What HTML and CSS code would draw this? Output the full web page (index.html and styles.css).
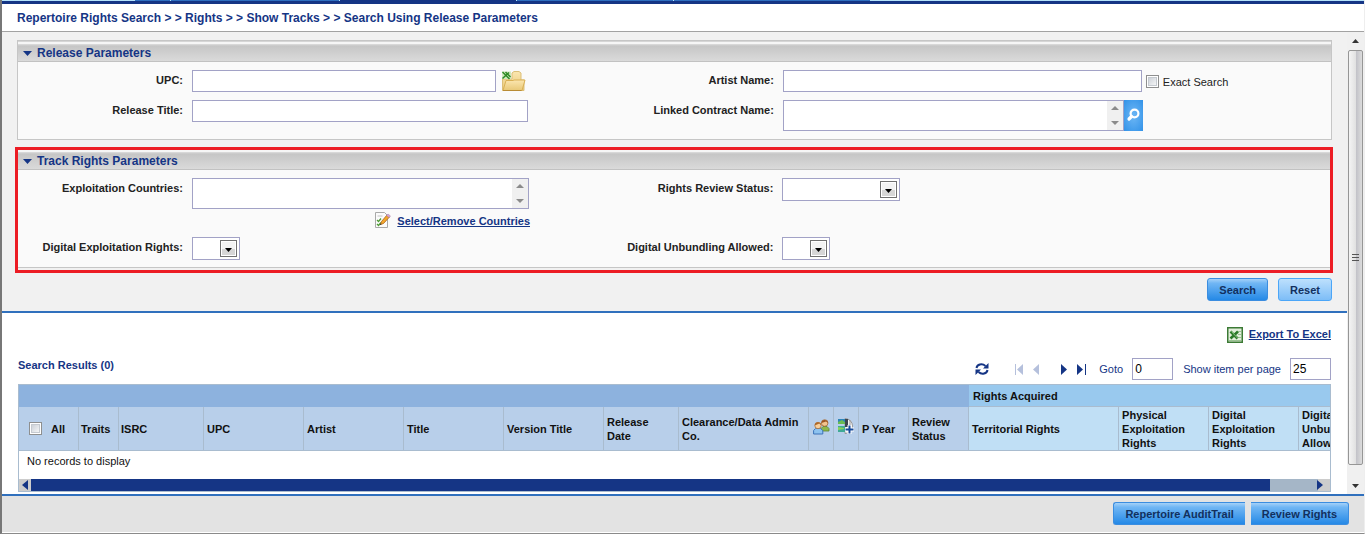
FILE: index.html
```html
<!DOCTYPE html>
<html lang="en">
<head>
<meta charset="utf-8">
<title>Repertoire Rights Search</title>
<link rel="stylesheet" href="styles.css">
</head>
<body>
<div class="app">
  <div class="tabs"><i class="tab first"></i><i class="tab second"></i><i class="tab third"></i><i class="tab current"></i><i class="tab fifth"></i><i class="tab sixth"></i><i class="tab seventh"></i></div>
  <h1 class="breadcrumb">Repertoire Rights Search &gt; &gt; Rights &gt; &gt; Show Tracks &gt; &gt; Search Using Release Parameters</h1>
  <div class="viewport">
    <main class="content">
      <form class="search">
        <section class="panel">
          <h2 class="panel-title"><svg width="9" height="5" viewBox="0 0 9 5"><path d="M0 0h9L4.500 5z" fill="#153585"/></svg>Release Parameters</h2>
          <div class="fields">
            <div class="field">
              <label for="upc">UPC:</label>
              <div class="control folder-gap"><input class="box upc" id="upc" type="text">
                <svg width="24" height="22" viewBox="0 0 24 22"><defs><linearGradient id="fold" x1="0" y1="0" x2="0" y2="1"><stop offset="0" stop-color="#fbe6b0"/><stop offset="1" stop-color="#e8c877"/></linearGradient></defs><path d="M.5 20.500V9h9.500V3l2-1.500h5L19 3v7h3v10.500z" fill="url(#fold)" stroke="#dcbf78"/><path d="M1 20.500L4 10.500h7l1-.5h11L20 20.500z" fill="url(#fold)" stroke="#d9b055"/><path d="M1 20.500h18.500" stroke="#b98c35"/><path d="M0 1.500h9V9H0z" fill="#d0e8bd"/><path d="M.5 2l7 7M7 2.500L.5 8.500M3.500 2l5 5" stroke="#2d8a24" stroke-width="1.500"/></svg></div>
            </div>
            <div class="field">
              <label for="artist">Artist Name:</label>
              <div class="control"><input class="box artist" id="artist" type="text"><input class="tick" id="exact" type="checkbox"><label class="plain" for="exact">Exact Search</label></div>
            </div>
            <div class="field">
              <label for="release">Release Title:</label>
              <div class="control"><input class="box release" id="release" type="text"></div>
            </div>
            <div class="field">
              <label for="contract">Linked Contract Name:</label>
              <div class="control flush">
                <div class="box area contract"><textarea id="contract" rows="1"></textarea><span class="spin"><svg width="8" height="20" viewBox="0 0 8 20"><path d="M0 4l4-4 4 4zM0 15h8l-4 4z" fill="#8b8b8b"/></svg></span></div>
                <button class="lookup" type="button" aria-label="Find contract"><svg width="15" height="15" viewBox="0 0 15 15"><circle cx="8.500" cy="5.500" r="3.900" fill="none" stroke="#fff" stroke-width="2.200"/><path d="M5.500 8.500L3 11" stroke="#fff" stroke-width="3.200" stroke-linecap="round"/></svg></button>
              </div>
            </div>
          </div>
        </section>
        <div class="highlight">
          <section class="panel inner">
            <h2 class="panel-title"><svg width="9" height="5" viewBox="0 0 9 5"><path d="M0 0h9L4.500 5z" fill="#153585"/></svg>Track Rights Parameters</h2>
            <div class="fields snug">
              <div class="field">
                <label for="countries">Exploitation Countries:</label>
                <div class="stack">
                  <div class="box area"><textarea id="countries" rows="1"></textarea><span class="spin"><svg width="8" height="20" viewBox="0 0 8 20"><path d="M0 4l4-4 4 4zM0 15h8l-4 4z" fill="#8b8b8b"/></svg></span></div>
                  <a class="link pick" href="#"><svg width="16" height="16" viewBox="0 0 16 16"><path d="M.5.500h9l3 3v12H.5z" fill="#fbfbfb" stroke="#a9a9a9"/><path d="M2.500 4h5" stroke="#c4c4c4"/><path d="M2 8l1.500 1.500L6 6.500M2 12l1.500 1.500L6 10.500" fill="none" stroke="#4f9a35" stroke-width="1.300"/><path d="M5.500 12.500l1-3L12 3l2.500 2L8.500 11.500z" fill="#f4a62a" stroke="#a8641a" stroke-width=".8"/><path d="M11.500 3.500L13 2l2.500 2L14 5.500z" fill="#d9a3d3" stroke="#9d7a9d" stroke-width=".5"/><path d="M5 13l1.500-.5-1-1z" fill="#222"/></svg><span>Select/Remove Countries</span></a>
                </div>
              </div>
              <div class="field">
                <label for="review">Rights Review Status:</label>
                <div class="pick-box wide"><select class="box" id="review"><option></option></select><span class="arrow"><svg width="7" height="4" viewBox="0 0 7 4"><path d="M0 0h7L3.500 4z"/></svg></span></div>
              </div>
              <div class="field">
                <label for="exploit">Digital Exploitation Rights:</label>
                <div class="pick-box"><select class="box" id="exploit"><option></option></select><span class="arrow"><svg width="7" height="4" viewBox="0 0 7 4"><path d="M0 0h7L3.500 4z"/></svg></span></div>
              </div>
              <div class="field">
                <label for="unbundle">Digital Unbundling Allowed:</label>
                <div class="pick-box"><select class="box" id="unbundle"><option></option></select><span class="arrow"><svg width="7" height="4" viewBox="0 0 7 4"><path d="M0 0h7L3.500 4z"/></svg></span></div>
              </div>
            </div>
          </section>
        </div>
        <div class="actions"><button class="btn" type="button">Search</button><button class="btn light" type="reset">Reset</button></div>
      </form>
      <section class="results">
        <a class="link export" href="#"><svg width="16" height="16" viewBox="0 0 16 16"><path d="M.75.750h14.500v14.500H.75z" fill="#e3efdc" stroke="#3c7a35" stroke-width="1.500"/><path d="M11 4.500h3M11 7.500h3M11 10.500h3M2 13.500h12" stroke="#9cc394"/><path d="M3.500 4.500l7 7M11 4.500l-7.500 7" stroke="#2c7a2a" stroke-width="2.600"/><path d="M4.500 4.500l6 6.500" stroke="#a5d597" stroke-width=".8"/></svg><span>Export To Excel</span></a>
        <div class="bar">
          <h2 class="count">Search Results (0)</h2>
          <div class="pager">
            <button class="icon refresh" type="button" aria-label="Refresh"><svg width="14" height="14" viewBox="0 0 14 14" fill="none" stroke="#153585" stroke-width="2"><path d="M1.500 6C2 2.500 7 1 10.500 4M12.500 8C12 11.500 7 13 3.500 10"/><path d="M13.500 1v5.500H8zM.5 13V7.500H6z" fill="#153585" stroke="none"/></svg></button>
            <button class="icon" type="button" aria-label="First page"><svg width="9" height="11" viewBox="0 0 9 11" fill="#b5c0dc"><path d="M0 0h1v11H0zM8 0v11L2 5.500z"/></svg></button>
            <button class="icon prev" type="button" aria-label="Previous page"><svg width="7" height="11" viewBox="0 0 7 11" fill="#b5c0dc"><path d="M6 0v11L0 5.500z"/></svg></button>
            <button class="icon next" type="button" aria-label="Next page"><svg width="7" height="11" viewBox="0 0 7 11" fill="#153585"><path d="M0 0v11l6-5.500z"/></svg></button>
            <button class="icon last" type="button" aria-label="Last page"><svg width="9" height="11" viewBox="0 0 9 11" fill="#153585"><path d="M8 0h1v11H8zM0 0v11l6-5.500z"/></svg></button>
            <label for="goto">Goto</label><input class="box num" id="goto" type="text" value="0">
            <label class="per" for="per">Show item per page</label><input class="box num" id="per" type="text" value="25">
          </div>
        </div>
        <div class="grid">
          <table>
            <colgroup><col class="w60"><col class="w40"><col class="w85"><col class="w100"><col class="w100"><col class="w100"><col class="w100"><col class="w75"><col class="w130"><col class="w25"><col class="w25"><col class="w50"><col class="w60"><col class="w150"><col class="w90"><col class="w90"><col class="w90"></colgroup>
            <thead>
              <tr class="groups"><th colspan="13"></th><th class="rights" colspan="4">Rights Acquired</th></tr>
              <tr class="heads">
                <th><span class="all"><input class="tick" id="all" type="checkbox"><label for="all">All</label></span></th>
                <th class="tight">Traits</th><th class="tight">ISRC</th><th>UPC</th><th>Artist</th><th>Title</th><th>Version Title</th><th>Release Date</th><th>Clearance/Data Admin Co.</th>
                <th class="pic"><svg width="17" height="16" viewBox="0 0 17 16"><path d="M8 12V9.500L10 7.500h4l2 2V12z" fill="#8db84a" stroke="#5c8630" stroke-width=".8"/><circle cx="11.700" cy="4" r="3.300" fill="#f2c48f" stroke="#9b5a25" stroke-width=".7"/><path d="M8.500 4C8 0 15 0 15 4l-2-1.500z" fill="#9b5420"/><path d="M.6 15v-3.500l2-2h5l2.200 2V15z" fill="#8dc3f0" stroke="#3c73b8"/><circle cx="5" cy="6.500" r="3.200" fill="#f8cf9b" stroke="#a5662c" stroke-width=".7"/><path d="M1.800 6.500C1.500 2 8.500 2 8.300 6.500l-2-2z" fill="#ad6827"/></svg></th>
                <th class="pic"><svg width="16" height="17" viewBox="0 0 16 17"><path d="M7 .5a7.500 7.500 0 0 1 0 15z" fill="#f5f5f5" stroke="#999"/><path d="M0 1h8v5H0z" fill="#2f86b9"/><path d="M0 4l4-2 4 3v1H0z" fill="#69bc52"/><path d="M0 8h7v6H0z" fill="#40aa95"/><path d="M0 9l6 1v1L0 12z" fill="#8cd457"/><path d="M7 1h3v8H7z" fill="#3c454e"/><path d="M12 2v5" stroke="#999"/><path d="M7 11.500h9M11.500 7v9" stroke="#fff" stroke-width="4"/><path d="M7.500 11.500h8M11.500 7.500v8" stroke="#164a9a" stroke-width="2"/></svg></th>
                <th>P Year</th><th>Review Status</th>
                <th class="right">Territorial Rights</th><th class="right">Physical Exploitation Rights</th><th class="right">Digital Exploitation Rights</th><th class="right">Digital Unbundling Allowed</th>
              </tr>
            </thead>
            <tbody><tr><td colspan="17">No records to display</td></tr></tbody>
          </table>
          <div class="hscroll"><span class="end"><svg width="6" height="10" viewBox="0 0 6 10"><path d="M6 0v10L0 5z" fill="#153585"/></svg></span><span class="thumb"></span><span class="track"><svg width="6" height="10" viewBox="0 0 6 10"><path d="M0 0v10l6-5z" fill="#153585"/></svg></span></div>
        </div>
      </section>
    </main>
    <div class="vscroll"><svg width="7" height="4" viewBox="0 0 7 4"><path d="M0 4h7L3.500 0z" fill="#333"/></svg><div class="vthumb"><i></i><i></i><i></i></div><svg width="7" height="4" viewBox="0 0 7 4"><path d="M0 0h7L3.500 4z" fill="#333"/></svg></div>
  </div>
  <footer class="footer"><button class="btn square-right" type="button">Repertoire AuditTrail</button><button class="btn square-left" type="button">Review Rights</button></footer>
</div>
</body>
</html>
```
FILE: styles.css
```css
* { box-sizing: border-box; }
body { margin: 0; background: #fff; color: #222; font-family: "Liberation Sans", Arial, sans-serif; font-size: 11px; line-height: 14px; }
h1, h2 { margin: 0; font-size: 12px; font-weight: bold; color: #153585; }
svg { display: block; flex: none; }
button, input, select, textarea { font: inherit; margin: 0; }

.app { display: flex; flex-direction: column; min-height: 100vh; border-left: 2px solid #777; border-right: 1px solid #eee; border-bottom: 1px solid #8a8a8a; }
.tabs { display: flex; gap: 1px; height: 4px; padding-bottom: 3px; background: linear-gradient(#b5e2fa 1px, #153585 1px); }
.tab { background: #2f6fc0; }
.first { flex: 132; background: #b5e2fa; }
.second { flex: 35; }
.third { flex: 168; }
.current { flex: 176; background: #153585; }
.fifth { flex: 156; }
.sixth { flex: 196; }
.seventh { flex: 493; background: #b5e2fa; }
.breadcrumb { padding: 7px 15px 6px; border-bottom: 1px solid #a2a2a2; }

.viewport { display: flex; flex: 1; }
.content { display: flex; flex: 1; flex-direction: column; min-width: 0; }
.search { padding: 8px 14px 10px 13px; background: #f1f1f1; border-bottom: 2px solid #3070bd; }
.panel { margin: 0 1px 0 2px; border: 1px solid #c6c6c6; background: #fafafa; }
.panel-title { display: flex; align-items: center; gap: 5px; height: 21px; padding: 4px 5px 0; border-bottom: 1px solid #c2c2c2; background: linear-gradient(#d6d6d6 1px, #f6f6f6 1px, #f6f6f6 3px, #dedede 3px, #c6c6c6 5px, #dadada); }
.fields { display: grid; grid-template-columns: 45fr 55fr; gap: 8px 0; padding: 8px 0; }
.snug { gap: 0; padding-bottom: 7px; }
.field { display: grid; grid-template-columns: 174px 1fr; align-items: start; }
.field > label { padding-right: 9px; text-align: right; font-weight: bold; line-height: 20px; }
.control { display: flex; align-items: center; gap: 4px; }
.folder-gap { gap: 6px; }
.flush { gap: 0; }
.box { height: 22px; border: 1px solid #a2a2c6; border-radius: 0; outline: 0; background: #fff; }
.upc { width: 304px; }
.release { width: 336px; }
.artist { width: 359px; }
.contract { width: 341px; }
.area { display: flex; height: 31px; }
.area textarea { flex: 1; min-width: 0; height: 29px; padding: 2px; border: 0; outline: 0; resize: none; overflow: hidden; }
.spin { display: grid; place-items: center; width: 16px; background: #f0f0f0; }
.lookup { display: grid; place-items: center; width: 19px; height: 31px; padding: 0; border: 0; background: radial-gradient(#6db7f5, #3292e8); }
.tick { appearance: none; flex: none; width: 13px; height: 13px; border: 1px solid #8e8f8f; background: linear-gradient(135deg, #c3c8d0, #fff); box-shadow: inset 0 0 0 1px #fff, inset 0 0 0 2px #c5cad0; }
.plain { padding-top: 2px; }
.highlight { margin-top: 7px; padding-bottom: 2px; border: 3px solid #ec1c24; }
.inner { margin: 0; border-width: 0 0 1px; }
.inner .panel-title { height: 20px; padding-top: 3px; background: linear-gradient(#f6f6f6 2px, #dedede 2px, #c6c6c6 4px, #dadada); }
.stack { display: flex; flex-direction: column; width: 338px; }
.stack .area { margin-right: 1px; }
.link { display: flex; align-items: center; color: #153585; font-weight: bold; }
.pick { justify-content: flex-end; gap: 6px; height: 28px; padding-bottom: 6px; }
.pick span { padding-top: 2px; }
.pick-box { display: grid; grid-template-columns: 1fr 21px; align-items: center; width: 48px; }
.wide { width: 118px; }
.pick-box select { grid-area: 1 / 1 / 2 / 3; width: 100%; height: 23px; appearance: none; }
.arrow { display: grid; grid-area: 1 / 2; place-items: center; width: 17px; height: 17px; margin-left: 1px; padding-top: 2px; border: 1px solid #707070; background: linear-gradient(#f3f3f3 50%, #d6d6d6 50%); box-shadow: inset 0 0 0 1px #fff; pointer-events: none; }
.actions { display: flex; justify-content: flex-end; gap: 10px; padding: 5px 1px 0 0; }
.btn { height: 23px; padding: 0 11px; border: 1px solid #3b8de0; border-radius: 3px; background: linear-gradient(#a5d1f8 0, #70b6f4 20%, #2589e6); color: #12305e; font-weight: bold; }
.light { border-color: #4ba6f8; background: linear-gradient(#bde0fd, #7dbdf7); }

.results { flex: 1; padding: 14px 16px 2px; }
.export { justify-content: flex-end; gap: 6px; height: 16px; }
.export span { padding-bottom: 2px; }
.bar { display: flex; justify-content: space-between; align-items: center; padding: 15px 0 4px; }
.count { padding-bottom: 8px; font-size: 11px; }
.pager { display: flex; align-items: center; color: #153585; }
.icon { padding: 0; border: 0; background: none; }
.refresh { margin-right: 26px; }
.prev { margin-left: 9px; }
.next { margin-left: 21px; }
.last { margin: 0 13px 0 9px; }
.num { width: 41px; margin-left: 9px; padding: 0 2px; font-size: 12px; color: #000; }
.per { margin-left: 10px; }
.grid { overflow: hidden; border: 1px solid #a9bccf; }
table { width: 1370px; table-layout: fixed; border-collapse: separate; border-spacing: 0; color: #111; }
th, td { padding: 0 3px; text-align: left; }
.w25 { width: 25px; } .w40 { width: 40px; } .w50 { width: 50px; } .w60 { width: 60px; } .w75 { width: 75px; }
.w85 { width: 85px; } .w90 { width: 90px; } .w100 { width: 100px; } .w130 { width: 130px; } .w150 { width: 150px; }
.groups th { height: 22px; background: #8db2de; }
.groups .rights { background: #99c9ee; border-bottom: 1px solid #a9bccf; padding-left: 4px; }
.heads th { height: 44px; border-right: 1px solid #a9bccf; border-bottom: 1px solid #a9bccf; background: #b8cfea; }
.heads .right { background: #c0dff5; }
.heads .tight { padding: 0 2px; }
.heads .pic { padding: 0 4px 4px; }
.all { display: flex; align-items: center; gap: 9px; padding-left: 7px; }
td { height: 28px; padding: 0 8px 8px; }
.hscroll { display: flex; height: 12px; }
.end { display: grid; place-items: center; width: 12px; background: #ccc; }
.thumb { flex: 1; background: #153585; }
.track { display: flex; align-items: center; justify-content: flex-end; width: 60px; padding-right: 7px; background: linear-gradient(90deg, #a5b6c7 48px, #ccc 48px); }

.vscroll { display: flex; flex-direction: column; align-items: center; width: 17px; padding: 7px 1px 6px; background: #f0f0f0; }
.vthumb { display: flex; flex: 1; flex-direction: column; align-items: center; justify-content: center; gap: 2px; width: 15px; margin: 7px 0 19px; border: 1px solid #969696; border-radius: 2px; background: linear-gradient(90deg, #f4f4f4, #e2e2e2 50%, #c2c2c8 55%, #dcdcdc); }
.vthumb i { width: 7px; height: 1px; background: #555; }
.footer { display: flex; justify-content: flex-end; gap: 6px; padding: 6px 15px 7px; border-top: 2px solid #3070bd; border-bottom: 1px solid #fff; background: #e3e3e3; }
.square-right { border-right: 0; border-radius: 3px 0 0 3px; }
.square-left { border-left: 0; border-radius: 0 3px 3px 0; }
```
